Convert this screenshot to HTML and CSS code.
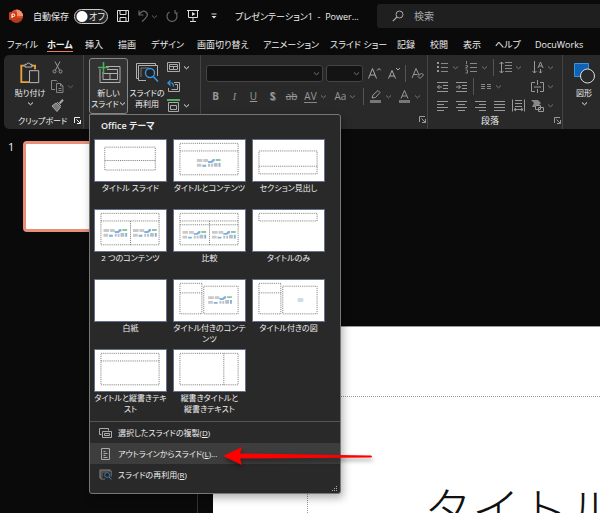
FILE: index.html
```html
<!DOCTYPE html>
<html lang="ja">
<head>
    <meta charset="UTF-8">
    <meta name="viewport" content="width=device-width, initial-scale=1.0">
    <title>プレゼンテーション1 - PowerPoint</title>
    <link rel="stylesheet" href="styles.css">
</head>
<body>

    <!-- Shared icons -->
    <svg class="sprite" aria-hidden="true">
        <symbol id="chev" viewBox="0 0 7 7"><path d="M1 2.500l2.500 2.300L6 2.500" fill="none" stroke="currentColor"/></symbol>
        <symbol id="launch" viewBox="0 0 7 7"><path d="M.5 6V.5H6M2.500 2.500l4 4M6.500 3v3.500H3" fill="none" stroke="currentColor"/></symbol>
        <symbol id="media" viewBox="0 0 26 10">
            <path d="M0 1h6v3H0zM7 1h5v3H7zM0 6h5v3H0z" fill="#c9c9c9"/>
            <path d="M12 3h3l2-2h2v2l-3 2h-4zM6 7h4v2H6zM23 5h2v4h-2z" fill="#7fb2dd"/>
            <path d="M20 1h5v2h-5z" fill="#8cc79a"/>
            <path d="M12 6h2v3h-2zM15 6h2v3h-2zM18 5h4v4h-4z" fill="#b9bfc6"/>
        </symbol>
        <symbol id="reuse" viewBox="0 0 24 22">
            <path d="M4 16.500H1.500V1.500h19V4M11 18.500H3.500V3.500h19V14" fill="none" stroke="#b0b0b0"/>
            <path d="M6 15V6h8" fill="none" stroke="#777"/>
            <circle cx="15" cy="11" r="4.500" fill="#222" stroke="#3b94d9" stroke-width="1.400"/>
            <path d="M18.300 14.500l4.700 5" stroke="#3b94d9" stroke-width="1.600"/>
        </symbol>
    </svg>

    <header class="titlebar">
        <svg class="logo" viewBox="0 0 14 14"><circle cx="7.500" cy="7" r="6.500" fill="#d35230"/><path d="M7.500.5A6.500 6.500 0 0 1 14 7H7.500z" fill="#ff8f6b"/><path d="M1.200 9a6.500 6.500 0 0 0 12.500 0z" fill="#b7391c"/><rect x="0" y="3" width="8" height="8" rx="1" fill="#c43e1c"/><path d="M3 9V5h1.500a1.200 1.200 0 0 1 0 2.500H3" fill="none" stroke="#fff"/></svg>
        <label for="autosave">自動保存</label>
        <span class="toggle"><input type="checkbox" id="autosave"><span>オフ</span></span>
        <div class="quick">
            <button aria-label="上書き保存"><svg viewBox="0 0 14 14"><path d="M1.500 1.500h11v11h-11zM4 1.500v4h6v-4M4 12.500V8.500h6v4" fill="none" stroke="#ddd"/></svg></button>
            <button aria-label="元に戻す" class="off"><svg viewBox="0 0 14 14"><path d="M2 1.500V6h4.500M2 6c2-4 5-4.500 7-3 3 2.500 1 5-4 9.500" fill="none" stroke="currentColor" stroke-width="1.200"/></svg><svg class="chev"><use href="#chev"/></svg></button>
            <button aria-label="やり直し" class="off"><svg viewBox="0 0 14 14"><path d="M10 1v3h3M9.500 3a5 5 0 1 1-5 0" fill="none" stroke="currentColor" stroke-width="1.200"/></svg></button>
            <button aria-label="先頭から開始"><svg viewBox="0 0 14 14"><path d="M1 1.500h12M2.500 1.500v7h9v-7M7 8.500V12M4 12.500h6" fill="none" stroke="#ddd"/><path d="M6 3l3.500 2L6 7z" fill="#ddd"/></svg></button>
            <button aria-label="カスタマイズ"><svg viewBox="0 0 14 14"><path d="M4.500 5h5" stroke="#ddd"/><path d="M4.500 7h5L7 9.500z" fill="#ddd"/></svg></button>
        </div>
        <h1>プレゼンテーション1&nbsp; -&nbsp; Power…</h1>
        <div class="search">
            <svg viewBox="0 0 12 12"><circle cx="7.500" cy="4.500" r="3.500" fill="none" stroke="#aaa"/><path d="M5 7L.8 11.200" stroke="#aaa" stroke-width="1.200"/></svg>
            <input type="text" placeholder="検索" aria-label="検索">
        </div>
    </header>

    <nav class="tabs">
        <a href="#">ファイル</a>
        <a href="#" class="active">ホーム</a>
        <a href="#">挿入</a>
        <a href="#">描画</a>
        <a href="#">デザイン</a>
        <a href="#">画面切り替え</a>
        <a href="#">アニメーション</a>
        <a href="#">スライド ショー</a>
        <a href="#">記録</a>
        <a href="#">校閲</a>
        <a href="#">表示</a>
        <a href="#">ヘルプ</a>
        <a href="#">DocuWorks</a>
    </nav>

    <div class="ribbon">
        <section class="group clipboard">
            <div class="tools">
                <button class="big">
                    <svg viewBox="0 0 24 24"><path d="M6 4H2.500v18H11M14 4h3.500v4" fill="none" stroke="#e8a33d" stroke-width="2"/><path d="M6.500 5.500v-3h2a1.800 1.800 0 0 1 3.500 0h2v3z" fill="#292929" stroke="#c8c8c8"/><path d="M11.500 9.500h10v13h-10z" fill="#292929" stroke="#c8c8c8"/></svg>
                    <span>貼り付け</span>
                    <svg class="chev"><use href="#chev"/></svg>
                </button>
                <div class="stack">
                    <button aria-label="切り取り"><svg viewBox="0 0 13 13"><path d="M4 .5l4.500 8.500M9 .5L4.500 9" fill="none" stroke="#999"/><circle cx="3.500" cy="10.500" r="1.500" fill="none" stroke="#999"/><circle cx="9.500" cy="10.500" r="1.500" fill="none" stroke="#999"/></svg></button>
                    <button aria-label="コピー" class="off"><svg viewBox="0 0 13 13"><path d="M4 9.500H.5v-9h5l1 1M5.500 3.500h4l2.500 2.500v6.500H5.500zM9.500 3.500V6H12M7.500 8.500h3M7.500 10.500h3" fill="none" stroke="#858585"/></svg><svg class="chev"><use href="#chev"/></svg></button>
                    <button aria-label="書式のコピー"><svg viewBox="0 0 13 13"><path d="M12 .8L8.500 4.500" stroke="#aaa" stroke-width="2"/><path d="M6 3l4 4M1 7l4-3 4.500 4-3.500 4.500z" fill="#777" stroke="#aaa"/></svg></button>
                </div>
            </div>
            <h2>クリップボード <button class="launch" aria-label="クリップボード"><svg><use href="#launch"/></svg></button></h2>
        </section>

        <section class="group slides">
            <div class="tools">
                <div class="dropdown">
                    <button class="big open">
                        <svg viewBox="0 0 24 22"><path d="M3 7v13.500h20V4.500H9M6 10v7.500h14.500v-10H10M6 11.500h14.500M13 11.500v6" fill="none" stroke="#b0b0b0"/><path d="M6.500 0v12M1 5.500h11" stroke="#4fae5d" stroke-width="1.600"/></svg>
                        <span>新しい</span>
                        <span>スライド<svg class="chev"><use href="#chev"/></svg></span>
                    </button>

                    <div class="menu">
                        <h3>Office テーマ</h3>
                        <div class="layouts">
                            <button><svg viewBox="0 0 73 43"><path d="M9.500 7.500h53v24h-53zM9.500 21.500h53"/></svg>タイトル スライド</button>
                            <button><svg viewBox="0 0 73 43"><path d="M5.500 3.500h61v33h-61zM5.500 11.500h61"/><use href="#media" x="23" y="19" width="26" height="10"/></svg>タイトルとコンテンツ</button>
                            <button><svg viewBox="0 0 73 43"><path d="M5.500 11.500h61v24h-61zM5.500 27.500h61"/></svg>セクション見出し</button>
                            <button><svg viewBox="0 0 73 43"><path d="M5.500 3.500h61v33h-61zM5.500 11.500h61M36.500 11.500v25"/><use href="#media" x="8" y="19" width="26" height="10"/><use href="#media" x="39" y="19" width="26" height="10"/></svg>2 つのコンテンツ</button>
                            <button><svg viewBox="0 0 73 43"><path d="M5.500 3.500h61v33h-61zM5.500 11.500h61M5.500 15.500h61M36.500 11.500v25"/><use href="#media" x="8" y="21" width="26" height="10"/><use href="#media" x="39" y="21" width="26" height="10"/></svg>比較</button>
                            <button><svg viewBox="0 0 73 43"><path d="M5.500 3.500h61v8h-61z"/></svg>タイトルのみ</button>
                            <button><svg viewBox="0 0 73 43"></svg>白紙</button>
                            <button><svg viewBox="0 0 73 43"><path d="M5.500 3.500h23v32h-23zM5.500 13.500h23M30.500 6.500h36v29h-36z"/><use href="#media" x="35" y="16" width="26" height="10"/></svg>タイトル付きのコンテ<br>ンツ</button>
                            <button><svg viewBox="0 0 73 43"><path d="M5.500 3.500h23v32h-23zM5.500 13.500h23M30.500 6.500h36v29h-36z"/><path class="pic" d="M46 19h6v4h-6z"/></svg>タイトル付きの図</button>
                            <button><svg viewBox="0 0 73 43"><path d="M5.500 3.500h61v33h-61zM5.500 11.500h61"/></svg>タイトルと縦書きテキ<br>スト</button>
                            <button><svg viewBox="0 0 73 43"><path d="M5.500 3.500h61v33h-61zM51.500 3.500v33"/></svg>縦書きタイトルと<br>縦書きテキスト</button>
                        </div>
                        <div class="commands">
                            <button><svg viewBox="0 0 13 12"><path d="M2.500 7.500h-2v-6h9v2M3.500 4.500h9v6h-9zM5.500 6.500h5v2h-5z" fill="none" stroke="#aaa"/></svg><span>選択したスライドの複製(<u>D</u>)</span></button>
                            <button class="hover"><svg viewBox="0 0 13 12"><path d="M2.500.5h8v11h-8zM4.500 3.500h2M4.500 5.500h4M4.500 7.500h2M4.500 9.500h4" fill="none" stroke="#aaa"/></svg><span>アウトラインからスライド(<u>L</u>)...</span></button>
                            <button><svg viewBox="0 0 24 22"><use href="#reuse" width="24" height="22"/></svg><span>スライドの再利用(<u>R</u>)</span></button>
                        </div>
                        <svg class="grip" viewBox="0 0 6 6"><path d="M4 0h1v1H4zM4 2h1v1H4zM4 4h1v1H4zM2 2h1v1H2zM2 4h1v1H2zM0 4h1v1H0z" fill="#aaa"/></svg>
                        <svg class="arrow" viewBox="0 0 152 20"><path d="M1 10L20 1l-2 6.500L149 9.500q2 1 0 2L18 12.500l2 6.500z" fill="#f00"/></svg>
                    </div>
                </div>
                <button class="big">
                    <svg viewBox="0 0 24 22"><use href="#reuse" width="24" height="22"/></svg>
                    <span>スライドの</span>
                    <span>再利用</span>
                </button>
                <div class="stack">
                    <button aria-label="レイアウト"><svg viewBox="0 0 13 13"><path d="M.5 1.500h12v9H.5zM2.500 3.500h8v5h-8zM2.500 5.500h8M6.500 5.500v3" fill="none" stroke="#aaa"/></svg><svg class="chev"><use href="#chev"/></svg></button>
                    <button aria-label="リセット"><svg viewBox="0 0 13 13"><path d="M7 2.500h5.500v9H1.500V8M4.500 9.500h6v-5H8" fill="none" stroke="#aaa"/><path d="M3.500.5L.8 3l2.700 2.500M1 3h3.500c1.500 0 2 1.500 2 3.500" fill="none" stroke="#3b94d9" stroke-width="1.200"/></svg></button>
                    <button aria-label="セクション"><svg viewBox="0 0 13 13"><path d="M0 1h13" stroke="#4fae5d" stroke-width="2"/><path d="M1.500 3.500h10v9h-10zM3.500 6.500h6v4h-6z" fill="none" stroke="#aaa"/></svg><svg class="chev"><use href="#chev"/></svg></button>
                </div>
            </div>
        </section>

        <section class="group font off">
            <div class="row">
                <button class="combo face" aria-label="フォント"><svg class="chev"><use href="#chev"/></svg></button>
                <button class="combo size" aria-label="フォント サイズ"><svg class="chev"><use href="#chev"/></svg></button>
                <button aria-label="フォント サイズの拡大"><svg viewBox="0 0 13 13"><path d="M.5 11.500L4.500 1.500l4 10M2 8h5M9 3.500L11 1.500l2 2" fill="none" stroke="#aaa"/></svg></button>
                <button aria-label="フォント サイズの縮小"><svg viewBox="0 0 13 13"><path d="M1.500 11.500L5 3.500l3.500 8M3 9h4M9 1l2 2 2-2" fill="none" stroke="#aaa"/></svg></button>
                <i class="sep"></i>
                <button aria-label="書式のクリア"><svg viewBox="0 0 13 13"><path d="M1 11L5 1.500 8 8M2.500 7.500h4" fill="none" stroke="#999"/><path d="M7 9.500l3.500-3.500 2 2L9 11.500z" fill="none" stroke="#999"/></svg></button>
            </div>
            <div class="row">
                <button><b>B</b></button>
                <button class="italic">I</button>
                <button><u>U</u></button>
                <button class="shadow"><b>S</b></button>
                <button><s>ab</s></button>
                <button class="split spacing"><span>AV</span><svg class="chev"><use href="#chev"/></svg></button>
                <button class="split case"><span>Aa</span><svg class="chev"><use href="#chev"/></svg></button>
                <i class="sep"></i>
                <button class="split" aria-label="蛍光ペン"><svg viewBox="0 0 13 13"><path d="M3 8l1-3 5-4.500 2 2L6.500 7.500z" fill="none" stroke="#999"/><path d="M1 10h11v3H1z" fill="#777"/></svg><svg class="chev"><use href="#chev"/></svg></button>
                <button class="split" aria-label="フォントの色"><svg viewBox="0 0 13 13"><path d="M3 8.500L6.500.5 10 8.500M4.300 6h4.400" fill="none" stroke="#999"/><path d="M1 10h11v3H1z" fill="#777"/></svg><svg class="chev"><use href="#chev"/></svg></button>
            </div>
            <h2><button class="launch" aria-label="フォント"><svg><use href="#launch"/></svg></button></h2>
        </section>

        <section class="group paragraph off">
            <div class="tools">
                <div class="left">
                    <div class="row">
                        <button class="split" aria-label="箇条書き"><svg viewBox="0 0 13 13"><path d="M1 1h2v2H1zM1 5h2v2H1zM1 9h2v2H1z" fill="#999"/><path d="M5 2.500h7M5 6.500h7M5 10.500h7" stroke="#888"/></svg><svg class="chev"><use href="#chev"/></svg></button>
                        <button class="split" aria-label="段落番号"><svg viewBox="0 0 13 13"><path d="M1.500 0v3M.5 4.500h2v1.500l-2 1h2M.5 9h2v3h-2" fill="none" stroke="#999" stroke-width=".8"/><path d="M5 2.500h7M5 6.500h7M5 10.500h7" stroke="#888"/></svg><svg class="chev"><use href="#chev"/></svg></button>
                        <i class="sep"></i>
                        <button class="split" aria-label="行間"><svg viewBox="0 0 13 13"><path d="M2.500 1v11M.5 3l2-2 2 2M.5 10l2 2 2-2" fill="none" stroke="#999"/><path d="M6 1.500h7M6 4.500h7M6 7.500h7M6 10.500h7" stroke="#888"/></svg><svg class="chev"><use href="#chev"/></svg></button>
                    </div>
                    <div class="row">
                        <button aria-label="インデントを減らす"><svg viewBox="0 0 13 13"><path d="M1 2.500h11M7 5.500h5M7 8.500h5M1 11.500h11M6 7H1.500M3.500 5l-2 2 2 2" fill="none" stroke="#999"/></svg></button>
                        <button aria-label="インデントを増やす"><svg viewBox="0 0 13 13"><path d="M1 2.500h11M7 5.500h5M7 8.500h5M1 11.500h11M1 7h4.500M3.500 5l2 2-2 2" fill="none" stroke="#999"/></svg></button>
                        <i class="sep"></i>
                        <button class="split" aria-label="段組み"><svg viewBox="0 0 13 13"><path d="M2 4.500h4M2 6.500h4M2 8.500h4M8 4.500h4M8 6.500h4M8 8.500h4" stroke="#888"/></svg><svg class="chev"><use href="#chev"/></svg></button>
                    </div>
                    <div class="row">
                        <button aria-label="左揃え"><svg viewBox="0 0 13 13"><path d="M1 2.500h11M1 5.500h7M1 8.500h11M1 11.500h7" stroke="#999"/></svg></button>
                        <button aria-label="中央揃え"><svg viewBox="0 0 13 13"><path d="M1 2.500h11M3 5.500h7M1 8.500h11M3 11.500h7" stroke="#999"/></svg></button>
                        <button aria-label="右揃え"><svg viewBox="0 0 13 13"><path d="M1 2.500h11M5 5.500h7M1 8.500h11M5 11.500h7" stroke="#999"/></svg></button>
                        <button aria-label="両端揃え"><svg viewBox="0 0 13 13"><path d="M1 2.500h11M1 5.500h11M1 8.500h11M1 11.500h11" stroke="#999"/></svg></button>
                        <button aria-label="均等割り付け"><svg viewBox="0 0 13 13"><path d="M.5.5v12M12.500.5v12M3 1.500h7M3 4.500h7M3 7.500h7M2 10.500h9M4 9l-2 1.500L4 12M9 9l2 1.500L9 12" fill="none" stroke="#999"/></svg></button>
                    </div>
                </div>
                <div class="stack">
                    <button aria-label="文字列の方向"><svg viewBox="0 0 13 13"><path d="M3.500 0v12M1.500 10l2 2 2-2M7 7l2.500-6L12 7M8 5h3M9.500 8v4M8 10.500L9.500 12l1.500-1.500" fill="none" stroke="#999"/></svg><svg class="chev"><use href="#chev"/></svg></button>
                    <button aria-label="文字の配置"><svg viewBox="0 0 13 13"><path d="M4 2.500H.5v9H4M9 2.500h3.500v9H9M3 7h7M6.500 0v5M6.500 9v4" fill="none" stroke="#999"/></svg><svg class="chev"><use href="#chev"/></svg></button>
                    <button aria-label="SmartArt に変換"><svg viewBox="0 0 13 13"><path d="M0 1h7l3 3-2 2H4v2H1l2-4z" fill="#888"/><path d="M4.500 6.500h5v4h-5zM7.500 8.500h5v4h-5z" fill="#292929" stroke="#999"/></svg><svg class="chev"><use href="#chev"/></svg></button>
                </div>
            </div>
            <h2><span>段落</span> <button class="launch" aria-label="段落"><svg><use href="#launch"/></svg></button></h2>
        </section>

        <section class="group drawing">
            <button class="big">
                <svg viewBox="0 0 24 22"><path d="M2.500 1.500h14v13h-14z" fill="#0f62b5" stroke="#3b94d9"/><circle cx="15.500" cy="14" r="7" fill="#292929" stroke="#ddd"/></svg>
                <span>図形</span>
                <svg class="chev"><use href="#chev"/></svg>
            </button>
        </section>
    </div>

    <main class="workspace">
        <aside class="thumbs">
            <span>1</span>
            <div class="thumb"></div>
        </aside>
        <div class="canvas">
            <div class="slide">
                <div class="placeholder">タイトル</div>
            </div>
        </div>
    </main>

</body>
</html>
```
FILE: styles.css
```css
* {
    box-sizing: border-box;
}
body {
    margin: 0;
    height: 100vh;
    display: flex;
    flex-direction: column;
    overflow: hidden;
    background: #0a0a0a;
    color: #eee;
    font-family: "Open Sans", "Noto Sans CJK JP", sans-serif;
    font-size: 9px;
    line-height: 11px;
    font-feature-settings: "palt";
}
h1, h2, h3 {
    margin: 0;
    font-size: 9px;
    font-weight: normal;
}
button {
    display: flex;
    align-items: center;
    justify-content: center;
    padding: 0;
    border: none;
    background: none;
    color: inherit;
    font: inherit;
    font-feature-settings: inherit;
}
svg {
    display: block;
    flex: none;
    width: 13px;
    height: 13px;
}
.sprite {
    display: none;
}
.chev, .launch svg {
    width: 7px;
    height: 7px;
}

/* Title bar */
.titlebar {
    display: flex;
    flex: none;
    align-items: center;
    height: 32px;
    padding-left: 9px;
}
.logo {
    width: 14px;
    height: 14px;
    margin-right: 10px;
}
.toggle {
    display: flex;
    align-items: center;
    position: relative;
    margin-left: 5px;
}
.toggle input {
    appearance: none;
    width: 34px;
    height: 15px;
    margin: 0;
    border: 1px solid #ccc;
    border-radius: 8px;
    background: radial-gradient(circle at 7px 50%, #fff 5px, #222 6px);
}
.toggle span {
    position: absolute;
    left: 15px;
}
.quick {
    display: flex;
    gap: 7px;
    margin-left: 8px;
}
.quick svg {
    width: 14px;
    height: 14px;
}
.quick .chev {
    width: 7px;
    height: 7px;
}
.quick .off {
    color: #666;
}
.titlebar h1 {
    width: 142px;
    margin-left: auto;
    white-space: nowrap;
}
.search {
    display: flex;
    align-items: center;
    gap: 10px;
    width: 223px;
    height: 24px;
    padding-left: 15px;
    border-radius: 3px 0 0 3px;
    background: #1f1f1f;
}
.search svg {
    width: 12px;
    height: 12px;
}
.search input {
    flex: 1;
    min-width: 0;
    padding: 0;
    border: none;
    background: none;
    font: inherit;
    font-size: 10px;
}
.search input::placeholder {
    color: #aaa;
}

/* Tabs */
.tabs {
    display: grid;
    flex: none;
    grid-template-columns: 40px 38px 33px 33px 46px 66px 67px 67px 33px 33px 32px 40px 1fr;
    height: 23px;
    padding-left: 7px;
    align-items: center;
}
.tabs a {
    justify-self: start;
    padding: 3px 0 1px;
    border-bottom: 1px solid transparent;
    color: #eee;
    text-decoration: none;
    white-space: nowrap;
}
.tabs .active {
    border-color: #e8825d;
    font-weight: bold;
}

/* Ribbon */
.ribbon {
    display: flex;
    flex: none;
    height: 74px;
    margin-left: 4px;
    border-radius: 5px 0 0 5px;
    background: #292929;
}
.group {
    display: flex;
    flex: none;
    flex-direction: column;
    position: relative;
    padding: 3px 0 4px;
    border-right: 1px solid #444;
}
.group .tools {
    display: flex;
    flex: 1;
}
.group h2 {
    display: flex;
    justify-content: space-between;
    align-items: center;
    padding: 0 2px 0 14px;
    white-space: nowrap;
}
.group.off {
    color: #999;
}
.group.off .chev {
    color: #777;
}
.clipboard {
    width: 80px;
}
.clipboard h2 {
    font-size: 8px;
}
.slides {
    width: 117px;
    padding-left: 5px;
}
.big {
    flex-direction: column;
    justify-content: flex-start;
    width: 38px;
    padding-top: 4px;
    font-size: 8px;
    white-space: nowrap;
}
.big > svg:first-child {
    width: 24px;
    height: 22px;
    margin-bottom: 3px;
}
.big > span {
    display: flex;
    align-items: center;
}
.big > .chev {
    margin-top: 2px;
}
.clipboard .big {
    width: 42px;
    margin-left: 5px;
}
.stack {
    display: grid;
    grid-template-rows: repeat(3, 19px);
    justify-items: start;
}
.stack button {
    gap: 3px;
}
.stack .off {
    color: #666;
}
.slides .stack {
    margin-left: 1px;
}
.slides .tools > .big {
    width: 36px;
    margin: 0 1px;
}
.dropdown {
    position: relative;
}
.dropdown .open {
    width: 39px;
    height: 56px;
    padding-top: 3px;
    border: 1px solid #888;
    border-radius: 3px;
    background: #333;
}
.row {
    display: flex;
    align-items: center;
    height: 19px;
}
.row button {
    width: 19px;
    height: 19px;
}
.row .split {
    gap: 3px;
    width: 29px;
}
.sep {
    width: 1px;
    height: 17px;
    margin: 0 2px;
    background: #555;
}
.font {
    width: 227px;
    padding-left: 5px;
    gap: 8px;
    font-size: 10px;
}
.font .row:first-child {
    padding-top: 10px;
}
.font .row {
    height: 21px;
}
.row .combo {
    justify-content: flex-end;
    height: 17px;
    padding-right: 2px;
    border: 1px solid #444;
    border-radius: 3px;
    background: #141414;
}
.row .face {
    width: 118px;
    margin-right: 3px;
}
.row .size {
    width: 37px;
    margin-right: 3px;
}
.italic {
    font-family: "Liberation Serif", serif;
    font-style: italic;
}
.shadow {
    text-shadow: 1px 1px #666;
}
.row .spacing span {
    border-bottom: 1px solid #888;
}
.row .case {
    width: 31px;
}
.font h2, .paragraph h2 {
    margin-top: auto;
    padding-right: 1px;
}
.font h2 {
    height: 11px;
    justify-content: flex-end;
}
.paragraph {
    width: 135px;
    padding-left: 5px;
}
.paragraph .left {
    width: 98px;
}
.paragraph h2 {
    padding-left: 48px;
}
.paragraph h2 span {
    color: #eee;
}
.drawing {
    padding-left: 2px;
    border: none;
}

/* New slide menu */
.menu {
    position: absolute;
    top: 56px;
    left: 0;
    z-index: 10;
    width: 252px;
    border: 1px solid #777;
    border-radius: 0 3px 3px 3px;
    background: #292929;
    box-shadow: 2px 4px 8px rgba(0, 0, 0, 0.3);
}
.menu h3 {
    padding: 5px 11px 8px;
    font-weight: 600;
}
.layouts {
    display: grid;
    grid-template-columns: repeat(3, 73px);
    grid-auto-rows: 70px;
    column-gap: 6px;
    padding: 0 4px 2px;
    border-bottom: 1px solid #555;
}
.layouts button {
    flex-direction: column;
    justify-content: flex-start;
    font-size: 8px;
    white-space: nowrap;
}
.layouts svg {
    width: 73px;
    height: 43px;
    border: 1px solid #66708c;
    background: #fff;
}
.layouts path {
    fill: none;
    stroke: #777;
    stroke-dasharray: 1 1;
}
.layouts .pic {
    fill: #cfdbe6;
    stroke: none;
}
.commands button {
    gap: 6px;
    width: 100%;
    height: 21px;
    padding-left: 9px;
    justify-content: flex-start;
    font-size: 8px;
}
.commands .hover {
    background: #3d3d3d;
}
.commands button svg {
    width: 13px;
    height: 12px;
}
.grip {
    width: 6px;
    height: 6px;
    margin: 1px 2px 1px auto;
}
.arrow {
    position: absolute;
    left: 132px;
    bottom: 27px;
    width: 152px;
    height: 20px;
    filter: drop-shadow(1px 3px 2px rgba(0, 0, 0, 0.4));
}

/* Slides */
.workspace {
    display: flex;
    flex: 1;
    min-height: 0;
}
.thumbs {
    display: flex;
    flex: none;
    align-items: flex-start;
    gap: 9px;
    width: 198px;
    padding: 12px 12px 0 8px;
    border-right: 1px solid #333;
    font-size: 11px;
}
.thumb {
    flex: 1;
    aspect-ratio: 16 / 9;
    border: 3px solid #e88f7a;
    border-radius: 4px;
    background: #fff;
}
.canvas {
    display: flex;
    flex: 1;
    min-width: 0;
    padding: 197px 0 0 15px;
}
.slide {
    flex: 1;
    min-width: 0;
    padding: 69px 0 0 94px;
    border-top: 1px solid #999;
    background: #fff;
    overflow: hidden;
}
.placeholder {
    padding: 82px 0 0 116px;
    border: 1px dotted #999;
    border-width: 1px 0 0 1px;
    color: #111;
    font-family: "Noto Sans CJK JP", sans-serif;
    font-size: 48px;
    font-weight: 300;
    font-feature-settings: normal;
    line-height: 56px;
    white-space: nowrap;
}
```
